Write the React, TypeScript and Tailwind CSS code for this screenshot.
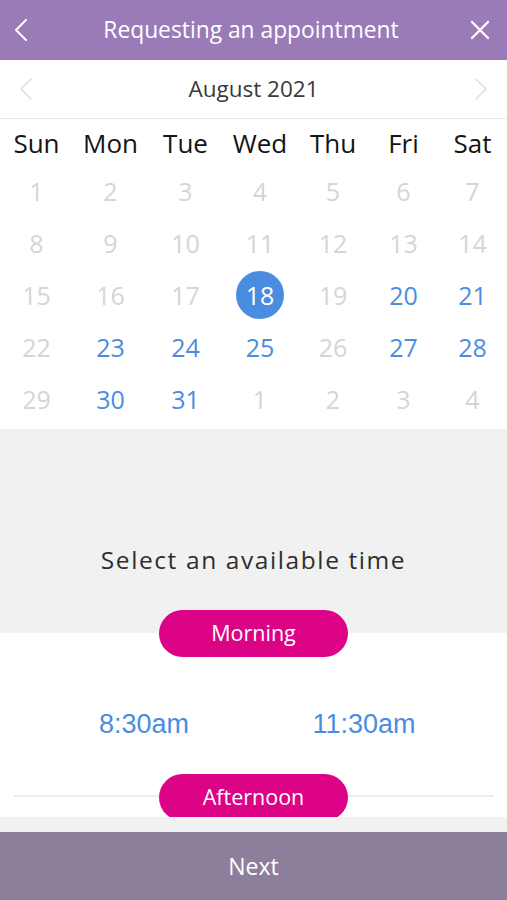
import React from "react";

const font = { fontFamily: '"Open Sans", "Noto Sans", sans-serif' };

type Cell = { n: number; state: "off" | "on" | "sel" };

const weeks: Cell[][] = [
  [1, 2, 3, 4, 5, 6, 7].map((n) => ({ n, state: "off" as const })),
  [8, 9, 10, 11, 12, 13, 14].map((n) => ({ n, state: "off" as const })),
  [
    { n: 15, state: "off" },
    { n: 16, state: "off" },
    { n: 17, state: "off" },
    { n: 18, state: "sel" },
    { n: 19, state: "off" },
    { n: 20, state: "on" },
    { n: 21, state: "on" },
  ],
  [
    { n: 22, state: "off" },
    { n: 23, state: "on" },
    { n: 24, state: "on" },
    { n: 25, state: "on" },
    { n: 26, state: "off" },
    { n: 27, state: "on" },
    { n: 28, state: "on" },
  ],
  [
    { n: 29, state: "off" },
    { n: 30, state: "on" },
    { n: 31, state: "on" },
    { n: 1, state: "off" },
    { n: 2, state: "off" },
    { n: 3, state: "off" },
    { n: 4, state: "off" },
  ],
];

const days = ["Sun", "Mon", "Tue", "Wed", "Thu", "Fri", "Sat"];

function Chevron({ dir, color, w = 2 }: { dir: "l" | "r"; color: string; w?: number }) {
  return (
    <svg width="14" height="22" viewBox="0 0 14 22" fill="none">
      <path
        d={dir === "l" ? "M12 1 L2 11 L12 21" : "M2 1 L12 11 L2 21"}
        stroke={color}
        strokeWidth={w}
        strokeLinecap="round"
        strokeLinejoin="round"
      />
    </svg>
  );
}

export default function App() {
  return (
    <div className="w-[507px] h-[900px] flex flex-col bg-white overflow-hidden" style={font}>
      {/* header */}
      <div className="h-[60px] bg-[#9a7bb7] flex items-center justify-between px-[14px] shrink-0">
        <Chevron dir="l" color="#ffffff" />
        <div className="text-white text-[22.8px] leading-none mt-[1px] ml-[4px]">Requesting an appointment</div>
        <svg width="20" height="20" viewBox="0 0 20 20" className="mr-[3px]">
          <path d="M2 2 L18 18 M18 2 L2 18" stroke="#ffffff" strokeWidth="2.4" strokeLinecap="round" />
        </svg>
      </div>

      {/* month row */}
      <div className="h-[59px] flex items-center justify-between px-[19px] border-b border-[#e8e8e8] shrink-0">
        <Chevron dir="l" color="#dcdcdc" w={1.5} />
        <div className="text-[22.5px] text-[#3a3a3a] leading-none">August 2021</div>
        <Chevron dir="r" color="#dcdcdc" w={1.5} />
      </div>

      {/* calendar */}
      <div className="grid grid-cols-[73px_75px_75px_74px_72px_69px_69px] pb-[4px] shrink-0">
        {days.map((d) => (
          <div key={d} className="h-[46px] flex items-center justify-center pt-[2px] text-[26px] text-[#141414] leading-none">
            {d}
          </div>
        ))}
        {weeks.flat().map((c, i) => (
          <div key={i} className="h-[52px] flex items-center justify-center">
            {c.state === "sel" ? (
              <div className="w-[48px] h-[48px] rounded-full bg-[#4a8de0] text-white flex items-center justify-center text-[25px] leading-none">
                {c.n}
              </div>
            ) : (
              <div
                className={
                  "text-[25px] leading-none " + (c.state === "on" ? "text-[#4a8de0]" : "text-[#d5d5d5]")
                }
              >
                {c.n}
              </div>
            )}
          </div>
        ))}
      </div>

      {/* gray select area */}
      <div className="h-[181px] bg-[#f1f1f1] flex items-end justify-center pb-[38px] shrink-0">
        <div className="text-[24.5px] text-[#2e2e2e] tracking-[1.6px] leading-none">Select an available time</div>
      </div>

      <div className="flex-1 flex flex-col overflow-hidden">
        <div className="flex justify-center bg-[linear-gradient(to_bottom,#f1f1f1_23px,#ffffff_23px)] shrink-0">
          <div className="w-[189px] h-[47px] rounded-full bg-[#dc0387] text-white text-[21.5px] flex items-center justify-center">
            Morning
          </div>
        </div>

        <div className="h-[117px] flex items-center pt-[17px] shrink-0" style={{ fontFamily: '"Liberation Sans", Arial, sans-serif' }}>
          <div className="w-[288px] text-center text-[27px] text-[#4a8de0]">8:30am</div>
          <div className="w-[152px] text-center text-[27px] text-[#4a8de0]">11:30am</div>
        </div>

        <div className="relative h-[43px] overflow-hidden shrink-0">
          <div className="absolute left-[14px] right-[13px] top-[21px] h-[2px] bg-[#ececec]" />
          <div className="relative flex justify-center">
            <div className="w-[189px] h-[47px] rounded-full bg-[#dc0387] text-white text-[21.5px] flex items-center justify-center">
              Afternoon
            </div>
          </div>
        </div>
        <div className="flex-1 bg-[#f1f1f1]" />
      </div>

      {/* footer */}
      <div className="h-[68px] bg-[#8d7f9b] flex items-center justify-center shrink-0">
        <div className="text-white text-[23px] leading-none">Next</div>
      </div>
    </div>
  );
}
